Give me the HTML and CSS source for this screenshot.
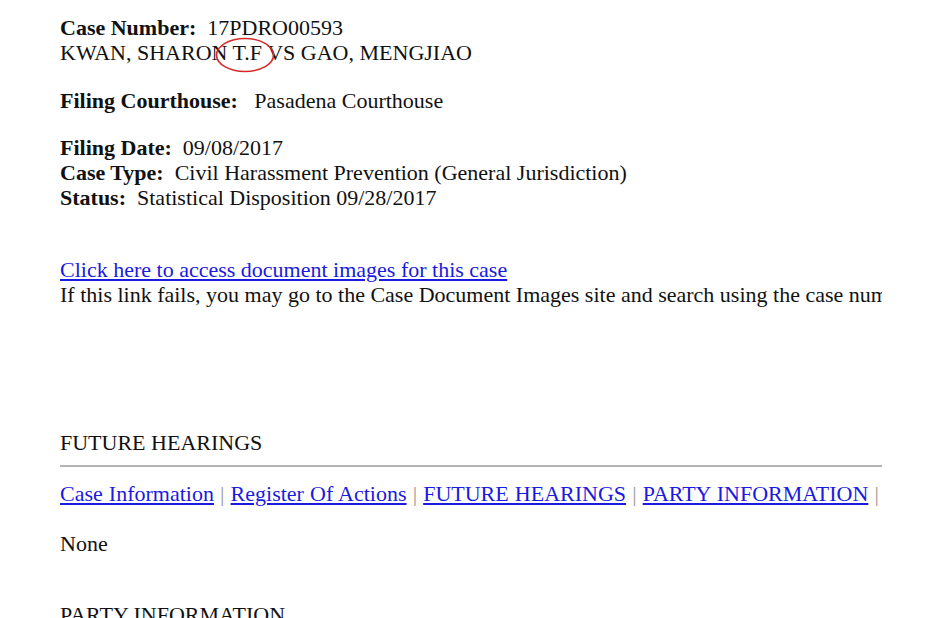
FILE: index.html
```html
<!DOCTYPE html>
<html lang="en">
<head>
    <meta charset="UTF-8">
    <title>Case Summary</title>
    <link rel="stylesheet" href="styles.css">
</head>
<body>

<div class="page">
    <p class="case-head">
        <b>Case Number:</b>&nbsp; 17PDRO00593<br>
        KWAN, SHARON <span class="marked">T.F<svg class="circle" width="60" height="36" viewBox="0 0 60 36"><ellipse cx="30" cy="18" rx="28.5" ry="16.5" fill="none" stroke="#d42a2a" stroke-width="1.6"/></svg></span> VS GAO, MENGJIAO
    </p>

    <p class="block"><b>Filing Courthouse:</b>&nbsp;&nbsp; Pasadena Courthouse</p>

    <p class="block">
        <b>Filing Date:</b>&nbsp; 09/08/2017<br>
        <b>Case Type:</b>&nbsp; Civil Harassment Prevention (General Jurisdiction)<br>
        <b>Status:</b>&nbsp; Statistical Disposition 09/28/2017
    </p>

    <p class="images">
        <a href="#">Click here to access document images for this case</a><br>
        If this link fails, you may go to the Case Document Images site and search using the case number displayed on this page
    </p>

    <div class="section-title">FUTURE HEARINGS</div>
    <hr>
    <div class="nav">
        <a href="#">Case Information</a> <span class="sep">|</span>
        <a href="#">Register Of Actions</a> <span class="sep">|</span>
        <a href="#">FUTURE HEARINGS</a> <span class="sep">|</span>
        <a href="#">PARTY INFORMATION</a> <span class="sep">|</span>
    </div>

    <p class="none">None</p>

    <div class="section-title party">PARTY INFORMATION</div>
</div>

</body>
</html>
```

FILE: styles.css
```css
html, body {
    margin: 0;
    padding: 0;
    background-color: #ffffff;
}
body {
    font-family: "Liberation Serif", "Times New Roman", serif;
    font-size: 22px;
    line-height: 25px;
    color: #111;
    height: 618px;
    overflow: hidden;
}
.page {
    width: 822px;
    margin-left: 60px;
    padding-top: 15px;
    overflow: hidden;
    white-space: nowrap;
}
p {
    margin: 0;
}
b {
    font-weight: bold;
}
a {
    color: #1a1ae0;
    text-decoration: underline;
}
.case-head {
    margin-bottom: 23px;
}
.marked {
    position: relative;
}
.circle {
    position: absolute;
    left: -18px;
    top: -3px;
}
.block {
    margin-bottom: 22px;
}
.images {
    margin-top: 47px;
}
.section-title {
    margin-top: 123px;
}
hr {
    border: none;
    height: 2px;
    background-color: #b4b4b4;
    margin: 10px 0 14px 0;
}
.nav {
    word-spacing: 0.6px;
}
.nav .sep {
    color: #999;
}
.none {
    margin-top: 25px;
}
.section-title.party {
    margin-top: 46px;
}
```
